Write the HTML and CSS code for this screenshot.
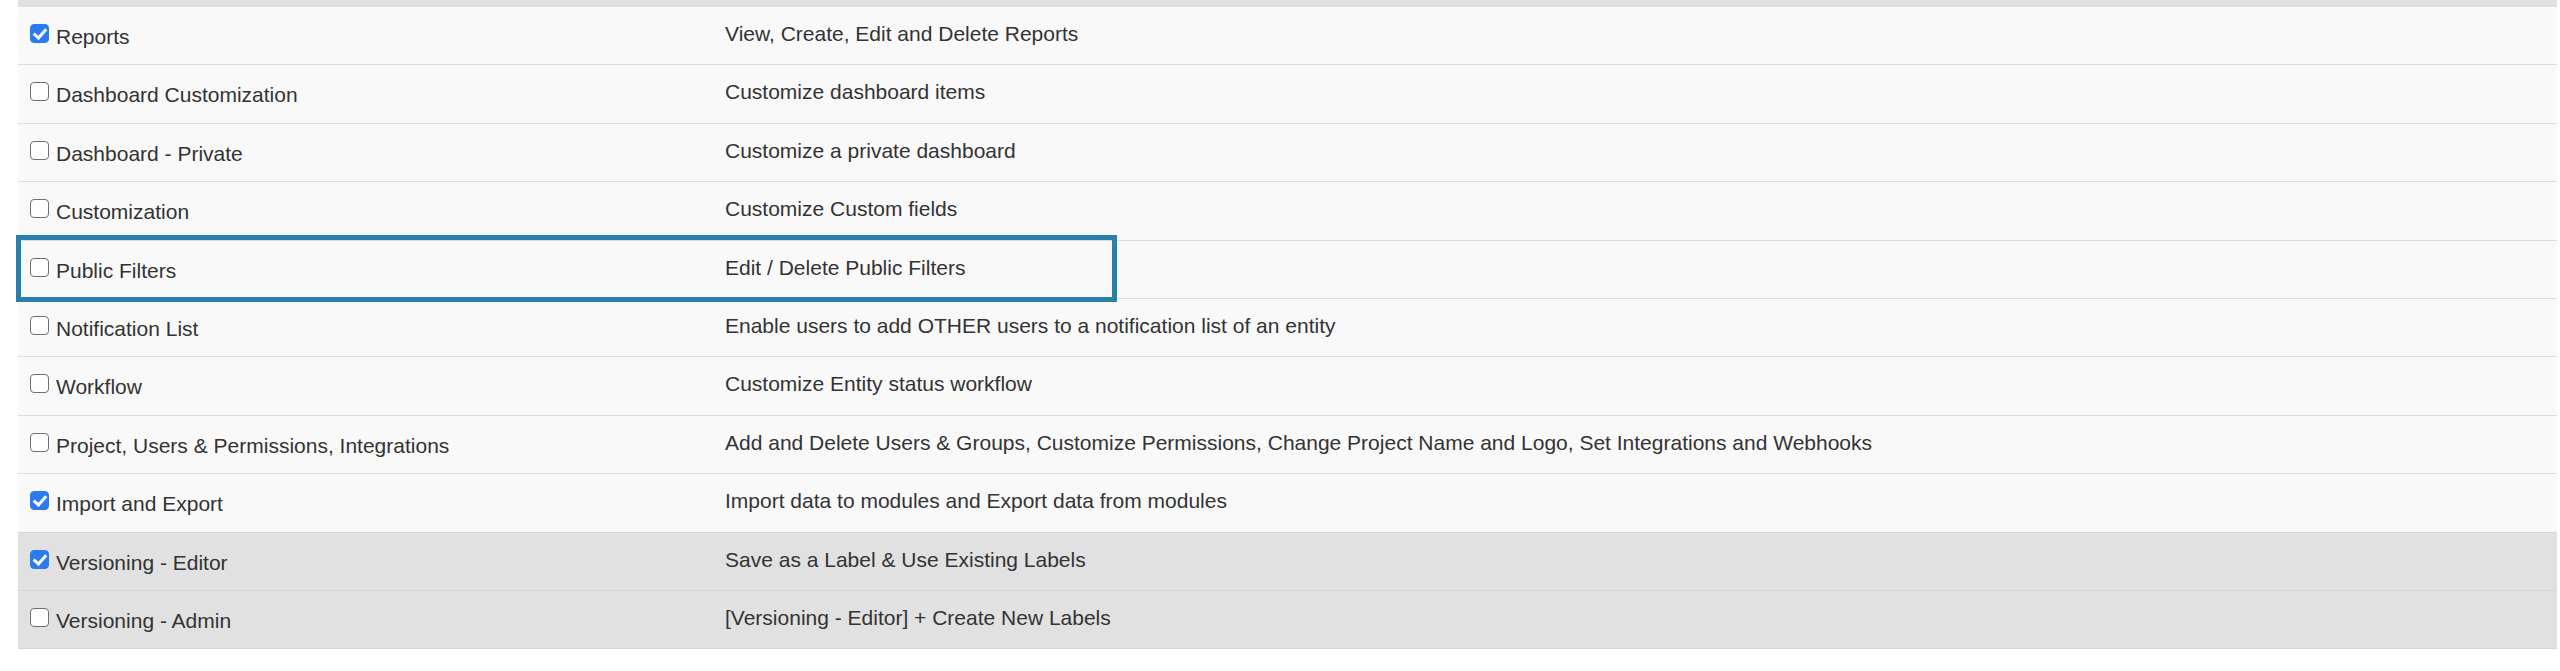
FILE: index.html
```html
<!DOCTYPE html>
<html>
<head>
<meta charset="utf-8">
<link rel="stylesheet" href="styles.css">
</head>
<body>
<div class="page">
  <div class="prev-band"></div>
  <div class="perm-table">
    <div class="row">
      <label class="name"><span class="cb checked"></span><span class="txt">Reports</span></label>
      <div class="desc">View, Create, Edit and Delete Reports</div>
    </div>
    <div class="row">
      <label class="name"><span class="cb"></span><span class="txt">Dashboard Customization</span></label>
      <div class="desc">Customize dashboard items</div>
    </div>
    <div class="row">
      <label class="name"><span class="cb"></span><span class="txt">Dashboard - Private</span></label>
      <div class="desc">Customize a private dashboard</div>
    </div>
    <div class="row">
      <label class="name"><span class="cb"></span><span class="txt">Customization</span></label>
      <div class="desc">Customize Custom fields</div>
    </div>
    <div class="row highlighted">
      <label class="name"><span class="cb"></span><span class="txt">Public Filters</span></label>
      <div class="desc">Edit / Delete Public Filters</div>
      <div class="focus-box"></div>
    </div>
    <div class="row">
      <label class="name"><span class="cb"></span><span class="txt">Notification List</span></label>
      <div class="desc">Enable users to add OTHER users to a notification list of an entity</div>
    </div>
    <div class="row">
      <label class="name"><span class="cb"></span><span class="txt">Workflow</span></label>
      <div class="desc">Customize Entity status workflow</div>
    </div>
    <div class="row">
      <label class="name"><span class="cb"></span><span class="txt">Project, Users &amp; Permissions, Integrations</span></label>
      <div class="desc">Add and Delete Users &amp; Groups, Customize Permissions, Change Project Name and Logo, Set Integrations and Webhooks</div>
    </div>
    <div class="row">
      <label class="name"><span class="cb checked"></span><span class="txt">Import and Export</span></label>
      <div class="desc">Import data to modules and Export data from modules</div>
    </div>
    <div class="row shaded">
      <label class="name"><span class="cb checked"></span><span class="txt">Versioning - Editor</span></label>
      <div class="desc">Save as a Label &amp; Use Existing Labels</div>
    </div>
    <div class="row shaded">
      <label class="name"><span class="cb"></span><span class="txt">Versioning - Admin</span></label>
      <div class="desc">[Versioning - Editor] + Create New Labels</div>
    </div>
  </div>
</div>
</body>
</html>
```

FILE: styles.css
```css
* { box-sizing: border-box; }
html, body {
  margin: 0;
  padding: 0;
  background: #ffffff;
}
body {
  font-family: "Liberation Sans", Arial, Helvetica, sans-serif;
  font-size: 21px;
  color: #333333;
}
.page {
  width: 2560px;
  padding-left: 18px;
  padding-right: 3px;
}
.prev-band {
  height: 6px;
  background: #e0e0e0;
}
.perm-table {
  border-bottom: 1px solid #d6d6d6;
}
.row {
  position: relative;
  display: grid;
  grid-template-columns: 695px 1fr;
  height: 58.4px;
  border-top: 1px solid #dddddd;
  background: #f9f9f9;
}
.row.shaded {
  background: #e1e1e1;
  border-top-color: #d6d6d6;
}
.name {
  display: flex;
  align-items: flex-start;
  padding-left: 12px;
  line-height: 24px;
}
.cb {
  display: block;
  width: 19px;
  height: 19px;
  margin-top: 17px;
  margin-right: 7px;
  border: 1.5px solid #6f6f6f;
  border-radius: 4px;
  background: #ffffff;
  position: relative;
  flex: none;
}
.cb.checked {
  background: #2a7af0;
  border-color: #2a7af0;
}
.cb.checked::after {
  content: "";
  position: absolute;
  left: 5px;
  top: 1px;
  width: 5px;
  height: 10px;
  border-right: 3px solid #ffffff;
  border-bottom: 3px solid #ffffff;
  transform: rotate(42deg);
}
.txt {
  margin-top: 18px;
  white-space: nowrap;
}
.desc {
  padding-left: 12px;
  padding-top: 15px;
  line-height: 24px;
  white-space: nowrap;
}
.focus-box {
  position: absolute;
  z-index: 2;
  left: -2px;
  top: -6px;
  width: 1101px;
  height: 67px;
  border: 5px solid #2b7fab;
  pointer-events: none;
}
```
